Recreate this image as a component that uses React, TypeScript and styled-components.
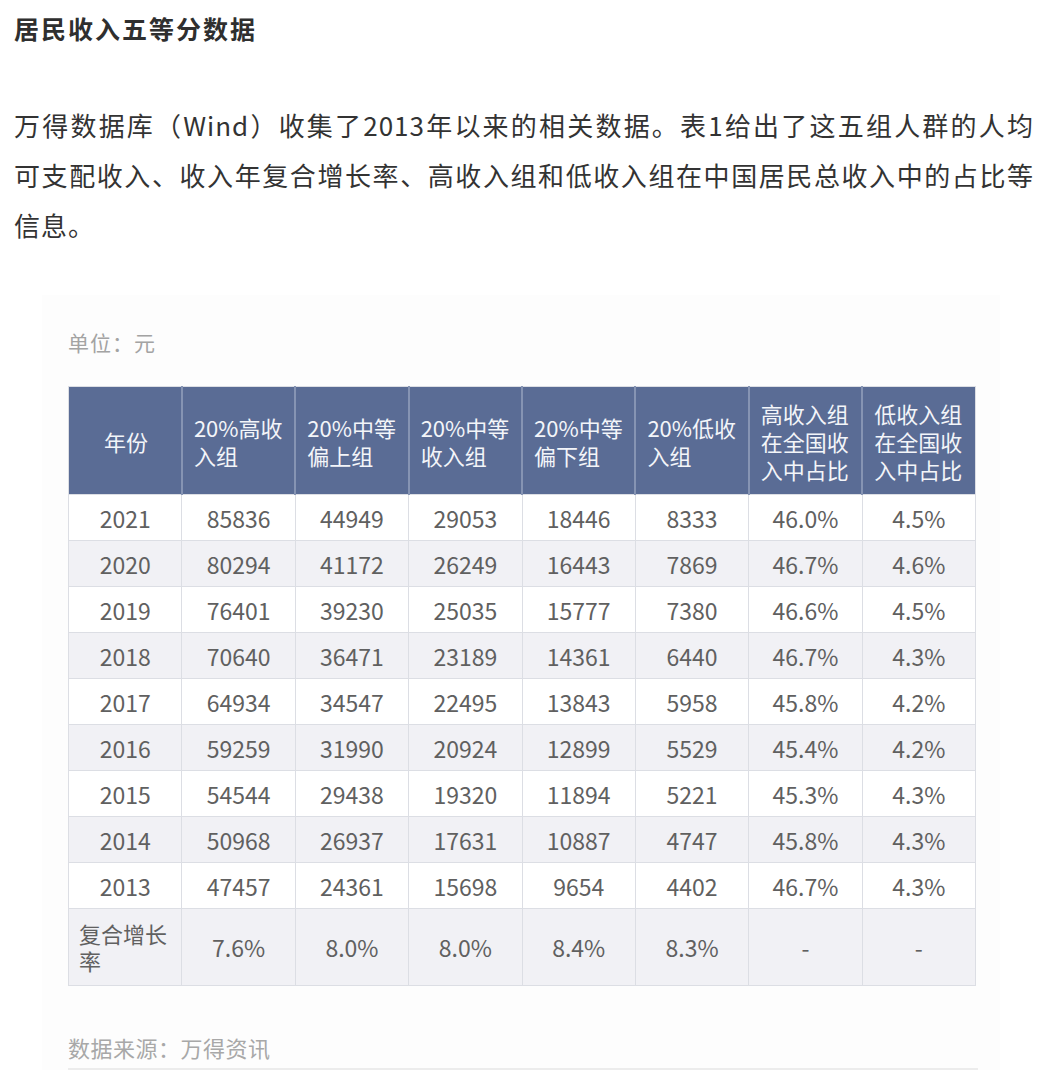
import React from "react";
import styled, { createGlobalStyle } from "styled-components";

const GlobalStyle = createGlobalStyle`
  html, body {
    margin: 0;
    padding: 0;
    background: #ffffff;
  }
  body {
    font-family: "Noto Sans CJK SC", "Noto Sans", sans-serif;
    color: #333333;
  }
`;

const Page = styled.div`
  padding: 0 14px 0 14px;
  width: 1051px;
  box-sizing: border-box;
`;

const Title = styled.h2`
  margin: 0;
  font-size: 25px;
  line-height: 56px;
  font-weight: 700;
  letter-spacing: 2px;
  color: #2f2f2f;
`;

const Paragraph = styled.p`
  margin: 44px 0 0 0;
  width: 1020px;
  font-size: 26px;
  line-height: 50px;
  letter-spacing: 1px;
  color: #333333;
`;

const Line = styled.span<{ $last?: boolean }>`
  display: block;
  white-space: nowrap;
  text-align: justify;
  text-align-last: ${(p) => (p.$last ? "left" : "justify")};
`;

const Panel = styled.section`
  margin: 45px 0 0 28px;
  width: 958px;
  box-sizing: border-box;
  padding: 32px 24px 0 26px;
  background: #fdfdfd;
`;

const Caption = styled.div`
  font-size: 21px;
  line-height: 30px;
  color: #a3a3a3;
  letter-spacing: 1px;
`;

const Table = styled.table`
  margin-top: 29px;
  width: 908px;
  border-collapse: collapse;
  table-layout: fixed;
  border: 1px solid #dcdee4;
`;

const HeadCell = styled.th<{ $center?: boolean }>`
  background: #5a6c95;
  color: #f3f5f9;
  font-weight: 400;
  font-size: 22px;
  line-height: 28px;
  height: 108px;
  box-sizing: border-box;
  padding: 0 9px 0 11px;
  text-align: ${(p) => (p.$center ? "center" : "left")};
  vertical-align: middle;
  border-left: 2px solid #8694b3;
  &:first-child {
    border-left: none;
  }
`;

const Row = styled.tr<{ $shade?: boolean }>`
  background: ${(p) => (p.$shade ? "#f1f1f5" : "#ffffff")};
`;

const Cell = styled.td<{ $tall?: boolean; $left?: boolean }>`
  height: ${(p) => (p.$tall ? "77px" : "46px")};
  box-sizing: border-box;
  padding: ${(p) => (p.$left ? "0 12px 0 10px" : "0")};
  text-align: ${(p) => (p.$left ? "left" : "center")};
  vertical-align: middle;
  font-size: ${(p) => (p.$left ? "22px" : "23px")};
  line-height: ${(p) => (p.$left ? "27px" : "30px")};
  color: #606060;
  border: 1px solid #dcdee4;
`;

const Source = styled.div`
  margin-top: 46px;
  padding-bottom: 6px;
  font-size: 22px;
  line-height: 30px;
  color: #a8a8a8;
  letter-spacing: 0.5px;
  width: 910px;
  border-bottom: 2px solid #ececec;
`;

const headers = [
  "年份",
  "20%高收入组",
  "20%中等偏上组",
  "20%中等收入组",
  "20%中等偏下组",
  "20%低收入组",
  "高收入组在全国收入中占比",
  "低收入组在全国收入中占比",
];

const rows: string[][] = [
  ["2021", "85836", "44949", "29053", "18446", "8333", "46.0%", "4.5%"],
  ["2020", "80294", "41172", "26249", "16443", "7869", "46.7%", "4.6%"],
  ["2019", "76401", "39230", "25035", "15777", "7380", "46.6%", "4.5%"],
  ["2018", "70640", "36471", "23189", "14361", "6440", "46.7%", "4.3%"],
  ["2017", "64934", "34547", "22495", "13843", "5958", "45.8%", "4.2%"],
  ["2016", "59259", "31990", "20924", "12899", "5529", "45.4%", "4.2%"],
  ["2015", "54544", "29438", "19320", "11894", "5221", "45.3%", "4.3%"],
  ["2014", "50968", "26937", "17631", "10887", "4747", "45.8%", "4.3%"],
  ["2013", "47457", "24361", "15698", "9654", "4402", "46.7%", "4.3%"],
];

const growth = ["7.6%", "8.0%", "8.0%", "8.4%", "8.3%", "-", "-"];

const paragraphLines = [
  "万得数据库（Wind）收集了2013年以来的相关数据。表1给出了这五组人群的人均",
  "可支配收入、收入年复合增长率、高收入组和低收入组在中国居民总收入中的占比等",
  "信息。",
];

export default function App() {
  return (
    <Page>
      <GlobalStyle />
      <Title>居民收入五等分数据</Title>
      <Paragraph>
        {paragraphLines.map((l, i) => (
          <Line key={i} $last={i === paragraphLines.length - 1}>
            {l}
          </Line>
        ))}
      </Paragraph>
      <Panel>
        <Caption>单位：元</Caption>
        <Table>
          <thead>
            <tr>
              {headers.map((h, i) => (
                <HeadCell key={h} $center={i === 0}>
                  {h}
                </HeadCell>
              ))}
            </tr>
          </thead>
          <tbody>
            {rows.map((r, ri) => (
              <Row key={r[0]} $shade={ri % 2 === 1}>
                {r.map((c, ci) => (
                  <Cell key={ci}>{c}</Cell>
                ))}
              </Row>
            ))}
            <Row $shade>
              <Cell $tall $left>
                复合增长率
              </Cell>
              {growth.map((g, gi) => (
                <Cell key={gi} $tall>
                  {g}
                </Cell>
              ))}
            </Row>
          </tbody>
        </Table>
        <Source>数据来源：万得资讯</Source>
      </Panel>
    </Page>
  );
}
